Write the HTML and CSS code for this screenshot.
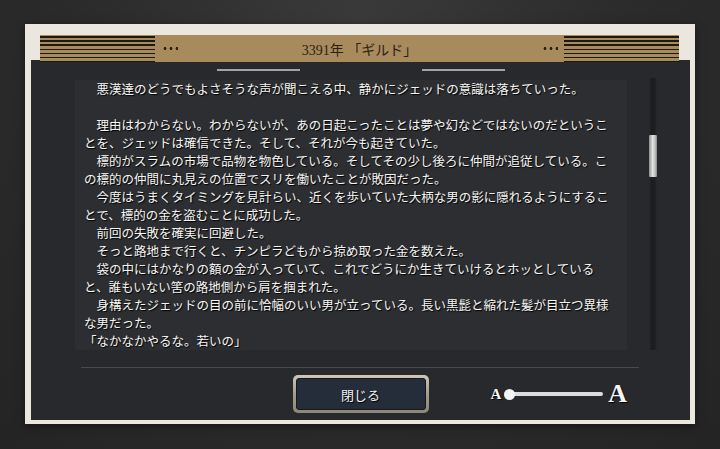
FILE: index.html
```html
<!DOCTYPE html>
<html lang="ja">
  <head>
    <link rel="stylesheet" href="styles.css">
    <meta charset="UTF-8" />
    <meta name="viewport" content="width=device-width, initial-scale=1.0" />
    <title>3391年 「ギルド」</title>
  </head>
  <body>
    <div class="frame">
      <div class="header">
        <div class="stripes"></div>
        <div class="dots"></div>
        <h1 class="title">3391年 「ギルド」</h1>
        <div class="dots"></div>
        <div class="stripes"></div>
      </div>
      <div class="panel">
        <div class="marks"><span></span><span></span></div>
        <div class="body-row">
          <div class="story">
            <p class="lead">　悪漢達のどうでもよさそうな声が聞こえる中、静かにジェッドの意識は落ちていった。</p>
            <p>　理由はわからない。わからないが、あの日起こったことは夢や幻などではないのだということを、ジェッドは確信できた。そして、それが今も起きていた。</p>
            <p>　標的がスラムの市場で品物を物色している。そしてその少し後ろに仲間が追従している。この標的の仲間に丸見えの位置でスリを働いたことが敗因だった。</p>
            <p>　今度はうまくタイミングを見計らい、近くを歩いていた大柄な男の影に隠れるようにすることで、標的の金を盗むことに成功した。</p>
            <p>　前回の失敗を確実に回避した。</p>
            <p>　そっと路地まで行くと、チンピラどもから掠め取った金を数えた。</p>
            <p>　袋の中にはかなりの額の金が入っていて、これでどうにか生きていけるとホッとしていると、誰もいない筈の路地側から肩を掴まれた。</p>
            <p>　身構えたジェッドの目の前に恰幅のいい男が立っている。長い黒髭と縮れた髪が目立つ異様な男だった。</p>
            <p>「なかなかやるな。若いの」</p>
          </div>
          <div class="scrollbar"><div class="thumb"></div></div>
        </div>
        <div class="divider"></div>
        <div class="footer">
          <button type="button" class="close-btn"><span>閉じる</span></button>
          <div class="font-size">
            <span class="a-small">A</span>
            <span class="knob"></span>
            <span class="bar"></span>
            <span class="a-big">A</span>
          </div>
        </div>
      </div>
    </div>
  </body>
</html>
```

FILE: styles.css
```css
body {
  margin: 0;
  padding: 24px 0 0 25px;
  height: 449px;
  box-sizing: border-box;
  overflow: hidden;
  background: radial-gradient(ellipse at 50% 5%, #3a3a3a 0%, #2c2c2c 50%, #242424 100%);
  font-family: "Noto Sans CJK JP", sans-serif;
}
.frame {
  width: 670px;
  height: 400px;
  box-sizing: border-box;
  padding: 11px 5px 4px 6px;
  background: #ebe7df;
  display: flex;
  flex-direction: column;
  box-shadow: 0 2px 8px rgba(0, 0, 0, 0.5);
}
.header {
  height: 27px;
  margin: 0 11px 0 9px;
  background: #a88b5d;
  display: flex;
  align-items: center;
  position: relative;
  z-index: 1;
}
.stripes {
  width: 115px;
  align-self: stretch;
  margin-top: 1px;
  background: repeating-linear-gradient(#1d1812 0 1.5px, transparent 1.5px 4.2px);
}
.dots {
  width: 16px;
  height: 3px;
  margin: 0 6px 0 7px;
  background: radial-gradient(circle, #2b2219 1.2px, transparent 1.7px) 0 0 / 6px 3px repeat-x;
}
.title {
  flex: 1;
  margin: 0;
  text-align: center;
  font: normal 14px "Liberation Serif", "Noto Sans CJK JP", serif;
  color: #2a2016;
}
.panel {
  flex: 1;
  margin-top: -2px;
  background: #28292d;
  display: flex;
  flex-direction: column;
}
.marks {
  height: 2px;
  margin: 9px 0;
  display: flex;
  justify-content: center;
  gap: 122px;
}
.marks span {
  width: 83px;
  background: #a3a3a3;
}
.body-row {
  display: flex;
  align-items: flex-start;
}
.story {
  width: 552px;
  height: 270px;
  margin-left: 44px;
  box-sizing: border-box;
  padding: 0 9px;
  background: #2d2e32;
  color: #f6f6f4;
  font-size: 12.5px;
  line-height: 18px;
  text-shadow: 1px 1px 1px #000;
}
.story p {
  margin: 0;
}
.story .lead {
  margin-bottom: 18px;
}
.scrollbar {
  width: 8px;
  height: 272px;
  margin: -2px 0 0 22px;
  background: linear-gradient(to right, transparent, #1c1d20 30%, #1c1d20 70%, transparent);
}
.thumb {
  height: 42px;
  margin-top: 57px;
  border-radius: 1px;
  background: linear-gradient(to right, #8c8c8c, #e2e2e2 45%, #c8c8c8 70%, #8a8a8a);
}
.divider {
  height: 1px;
  width: 558px;
  margin: 17px 0 7px 50px;
  background: #4a4b50;
}
.footer {
  display: grid;
  grid-template-columns: 1fr 136px 1fr;
  align-items: center;
  margin-bottom: 7px;
}
.close-btn {
  grid-column: 2;
  height: 38px;
  padding: 3px;
  border: none;
  border-radius: 5px;
  background: linear-gradient(#cfc8b8, #a39d8e 50%, #8c8677);
  cursor: pointer;
}
.close-btn span {
  display: flex;
  height: 100%;
  align-items: center;
  justify-content: center;
  box-sizing: border-box;
  border: 1px solid #15181e;
  border-radius: 3px;
  background: #252d3b;
  color: #f2f2f2;
  font-family: "Noto Sans CJK JP", sans-serif;
  font-size: 13px;
  text-shadow: 1px 1px 1px #000;
}
.font-size {
  display: flex;
  align-items: center;
  margin-left: 62px;
}
.a-small,
.a-big {
  font-family: "Liberation Serif", serif;
  font-weight: bold;
  color: #f4f4f4;
  text-shadow: 1px 1px 1px #000;
}
.a-small {
  font-size: 15px;
}
.a-big {
  font-size: 26px;
  margin-left: 5px;
}
.knob {
  width: 11px;
  height: 11px;
  margin-left: 3px;
  border-radius: 50%;
  background: #f4f4f4;
  position: relative;
  z-index: 1;
}
.bar {
  width: 93px;
  height: 4px;
  margin-left: -5px;
  border-radius: 2px;
  background: #dcdcdc;
}
```
